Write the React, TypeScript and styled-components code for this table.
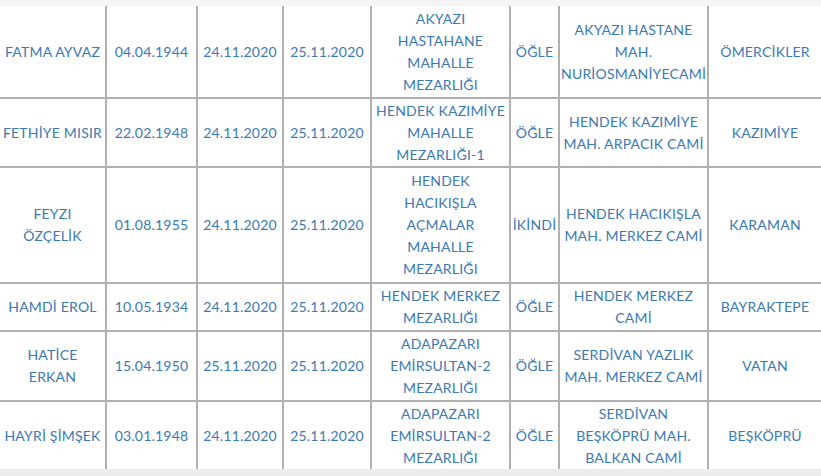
import styled, { createGlobalStyle } from 'styled-components'

const GlobalStyle = createGlobalStyle`
  html, body {
    margin: 0;
    padding: 0;
    background: #f1f1f1;
  }
  body {
    font-family: Lato, 'Open Sans', sans-serif;
    overflow: hidden;
  }
`

const Page = styled.div`
  width: 821px;
  height: 476px;
  padding-top: 6px;
  box-sizing: border-box;
  overflow: hidden;
  background: linear-gradient(#f4f4f4, #ececec);
`

const Table = styled.table`
  width: 821px;
  border-collapse: collapse;
  table-layout: fixed;
  background: #fff;
`

const Row = styled.tr<{ $h: number }>`
  height: ${({ $h }) => $h}px;
  &:not(:first-child) > td {
    border-top: 2px solid #b0b0b0;
  }
`

const Cell = styled.td`
  padding: 0 1px;
  text-align: center;
  vertical-align: middle;
  color: #3a79b3;
  font-size: 14px;
  line-height: 22px;
  letter-spacing: 0.2px;
  white-space: nowrap;
  overflow: hidden;
  &:not(:first-child) {
    border-left: 2px solid #b0b0b0;
  }
`

const Line = styled.span`
  display: block;
`

const widths = [106, 91, 86, 88, 139, 49, 149, 113]

type Entry = { h: number; cells: string[][] }

const rows: Entry[] = [
  {
    h: 92,
    cells: [
      ['FATMA AYVAZ'],
      ['04.04.1944'],
      ['24.11.2020'],
      ['25.11.2020'],
      ['AKYAZI', 'HASTAHANE', 'MAHALLE', 'MEZARLIĞI'],
      ['ÖĞLE'],
      ['AKYAZI HASTANE', 'MAH.', 'NURİOSMANİYECAMİ'],
      ['ÖMERCİKLER'],
    ],
  },
  {
    h: 69,
    cells: [
      ['FETHİYE MISIR'],
      ['22.02.1948'],
      ['24.11.2020'],
      ['25.11.2020'],
      ['HENDEK KAZIMİYE', 'MAHALLE', 'MEZARLIĞI-1'],
      ['ÖĞLE'],
      ['HENDEK KAZIMİYE', 'MAH. ARPACIK CAMİ'],
      ['KAZIMİYE'],
    ],
  },
  {
    h: 116,
    cells: [
      ['FEYZI', 'ÖZÇELİK'],
      ['01.08.1955'],
      ['24.11.2020'],
      ['25.11.2020'],
      ['HENDEK', 'HACIKIŞLA', 'AÇMALAR', 'MAHALLE', 'MEZARLIĞI'],
      ['İKİNDİ'],
      ['HENDEK HACIKIŞLA', 'MAH. MERKEZ CAMİ'],
      ['KARAMAN'],
    ],
  },
  {
    h: 48,
    cells: [
      ['HAMDİ EROL'],
      ['10.05.1934'],
      ['24.11.2020'],
      ['25.11.2020'],
      ['HENDEK MERKEZ', 'MEZARLIĞI'],
      ['ÖĞLE'],
      ['HENDEK MERKEZ', 'CAMİ'],
      ['BAYRAKTEPE'],
    ],
  },
  {
    h: 70,
    cells: [
      ['HATİCE', 'ERKAN'],
      ['15.04.1950'],
      ['25.11.2020'],
      ['25.11.2020'],
      ['ADAPAZARI', 'EMİRSULTAN-2', 'MEZARLIĞI'],
      ['ÖĞLE'],
      ['SERDİVAN YAZLIK', 'MAH. MERKEZ CAMİ'],
      ['VATAN'],
    ],
  },
  {
    h: 68,
    cells: [
      ['HAYRİ ŞİMŞEK'],
      ['03.01.1948'],
      ['24.11.2020'],
      ['25.11.2020'],
      ['ADAPAZARI', 'EMİRSULTAN-2', 'MEZARLIĞI'],
      ['ÖĞLE'],
      ['SERDİVAN', 'BEŞKÖPRÜ MAH.', 'BALKAN CAMİ'],
      ['BEŞKÖPRÜ'],
    ],
  },
]

const App = () => (
  <Page>
    <GlobalStyle />
    <Table>
      <colgroup>
        {widths.map((w, i) => (
          <col key={i} style={{ width: w }} />
        ))}
      </colgroup>
      <tbody>
        {rows.map((r, i) => (
          <Row key={i} $h={r.h}>
            {r.cells.map((lines, j) => (
              <Cell key={j}>
                {lines.map((l, k) => (
                  <Line key={k}>{l}</Line>
                ))}
              </Cell>
            ))}
          </Row>
        ))}
      </tbody>
    </Table>
  </Page>
)

export default App
